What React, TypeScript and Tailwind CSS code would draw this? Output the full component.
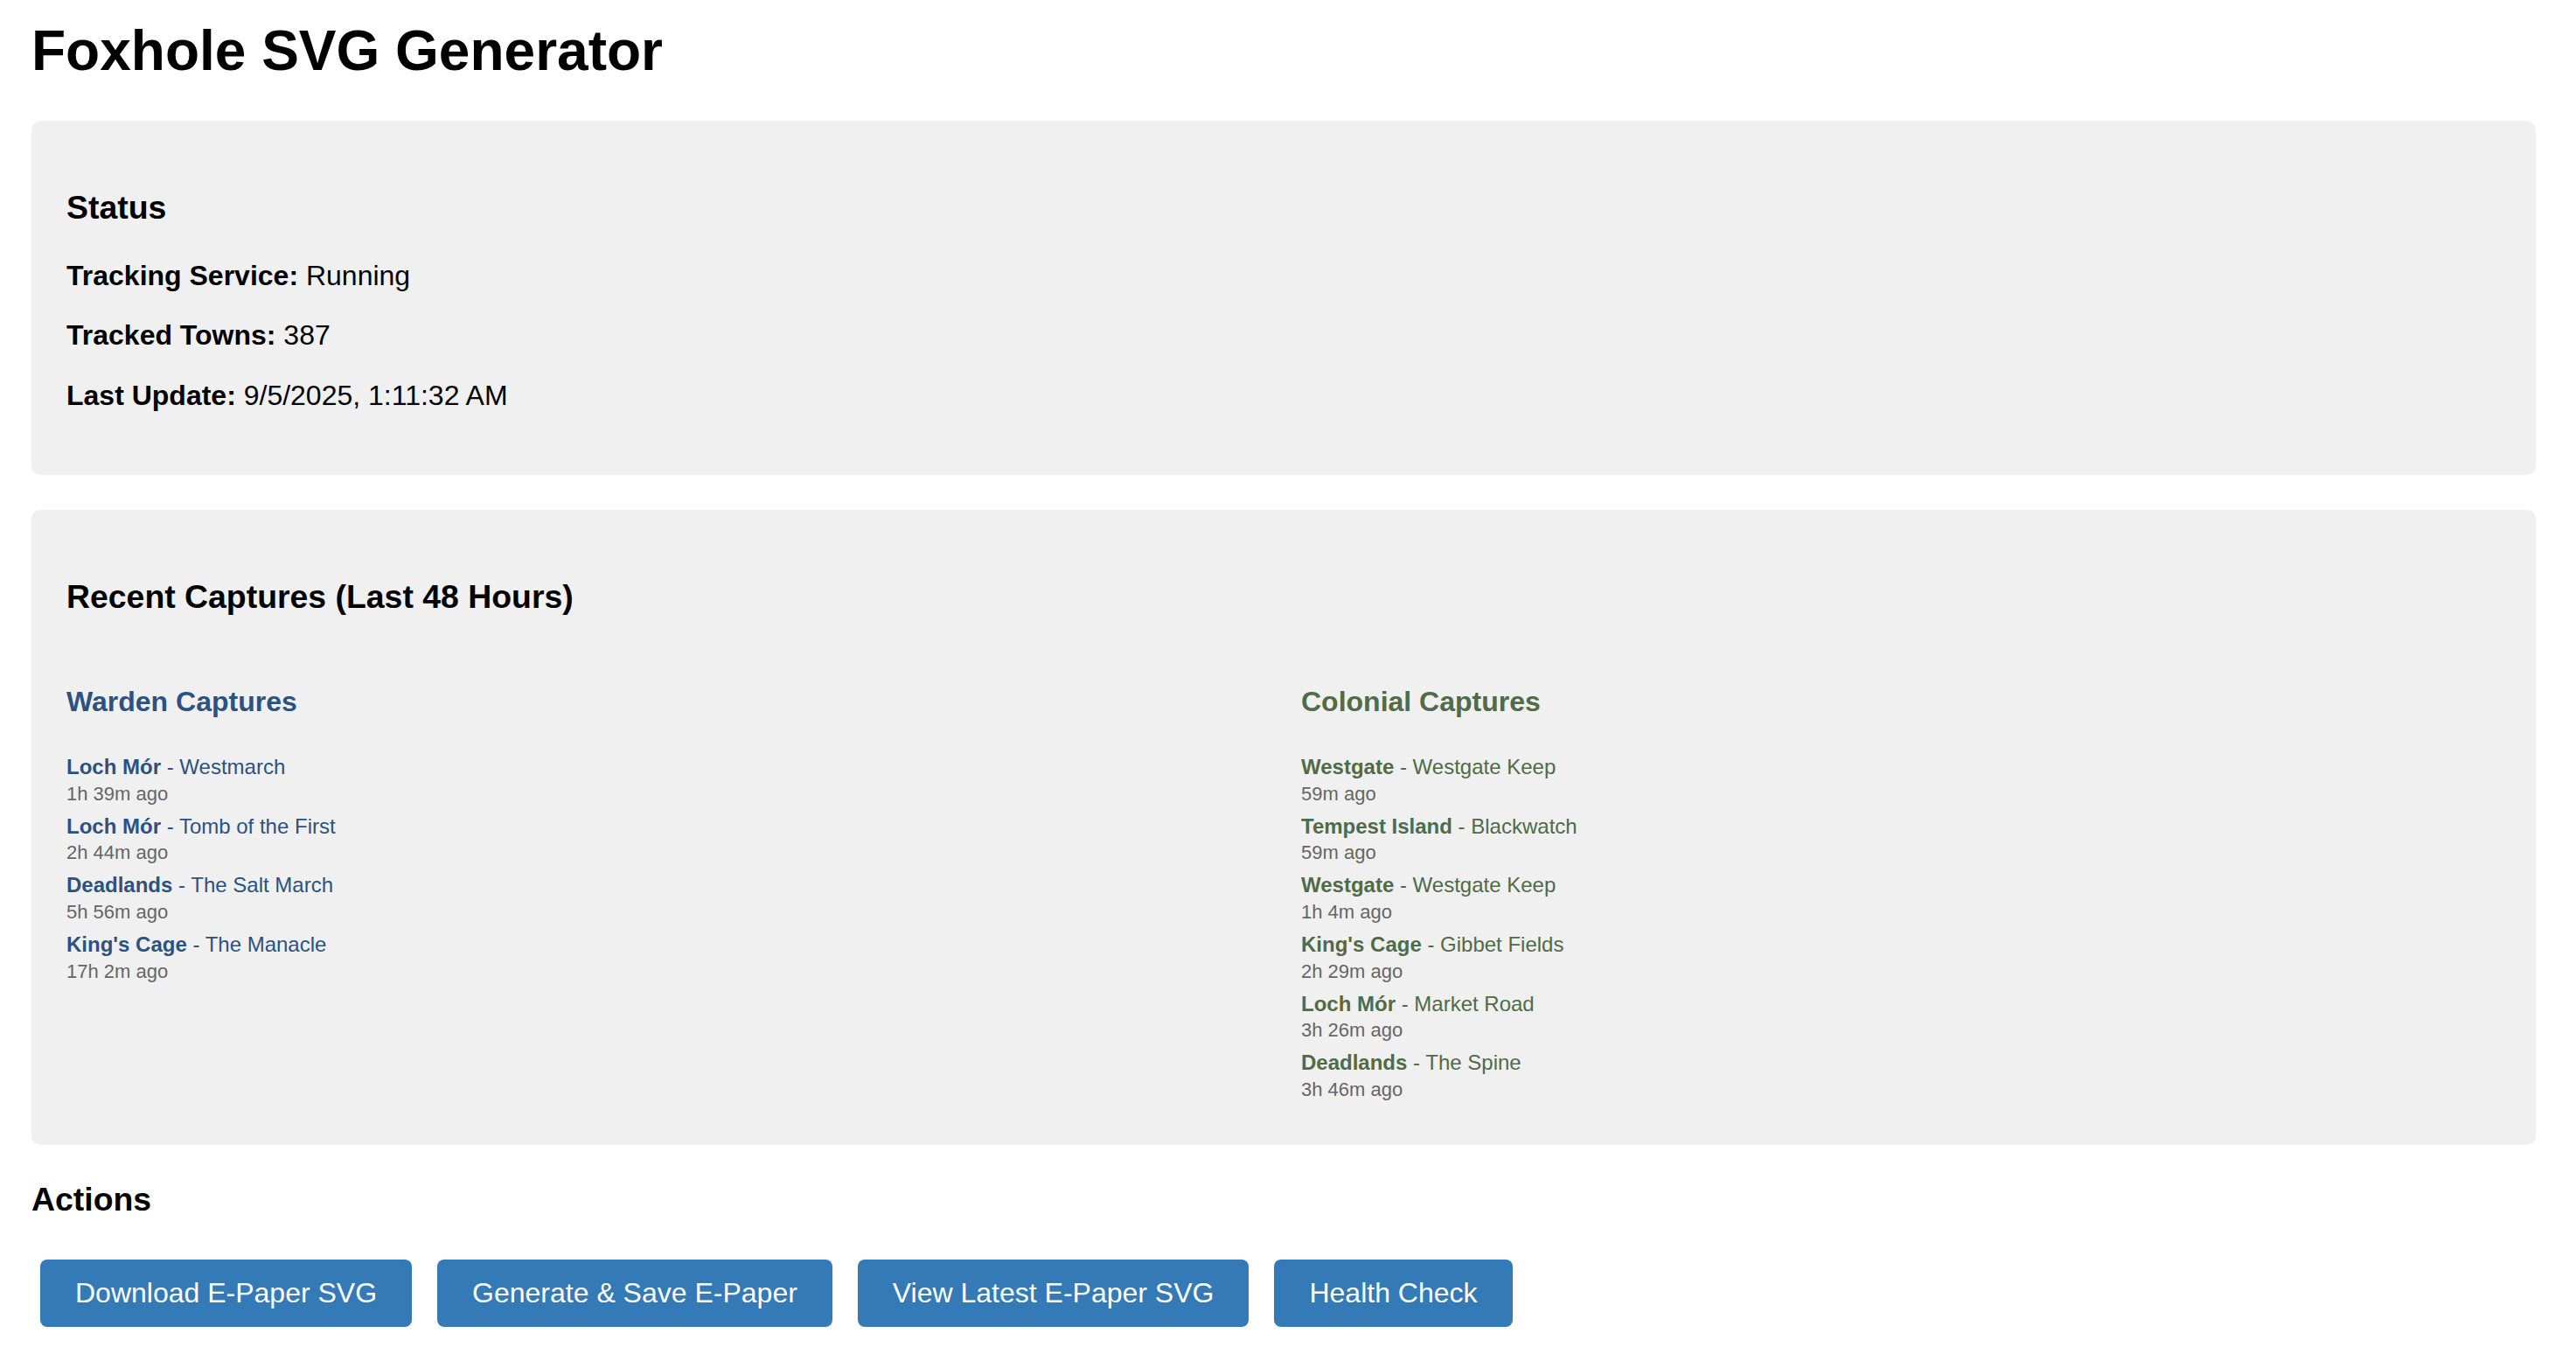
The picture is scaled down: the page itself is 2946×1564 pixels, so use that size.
import React from 'react';

type Capture = { region: string; town: string; ago: string };

const warden: Capture[] = [
  { region: 'Loch Mór', town: 'Westmarch', ago: '1h 39m ago' },
  { region: 'Loch Mór', town: 'Tomb of the First', ago: '2h 44m ago' },
  { region: 'Deadlands', town: 'The Salt March', ago: '5h 56m ago' },
  { region: "King's Cage", town: 'The Manacle', ago: '17h 2m ago' },
];

const colonial: Capture[] = [
  { region: 'Westgate', town: 'Westgate Keep', ago: '59m ago' },
  { region: 'Tempest Island', town: 'Blackwatch', ago: '59m ago' },
  { region: 'Westgate', town: 'Westgate Keep', ago: '1h 4m ago' },
  { region: "King's Cage", town: 'Gibbet Fields', ago: '2h 29m ago' },
  { region: 'Loch Mór', town: 'Market Road', ago: '3h 26m ago' },
  { region: 'Deadlands', town: 'The Spine', ago: '3h 46m ago' },
];

function CaptureList({ title, items, color }: { title: string; items: Capture[]; color: 'warden' | 'colonial' }) {
  const textColor = color === 'warden' ? 'text-[#2c5282]' : 'text-[#4f6b47]';
  return (
    <div>
      <h4 className={`${textColor} text-[32px] leading-[36.8px] font-bold mt-[42px] mb-[42.6px]`}>{title}</h4>
      {items.map((c, i) => (
        <div key={i} className="mb-[10.7px]">
          <div className={`${textColor} text-[24px] leading-[27.6px]`}>
            <span className="font-bold">{c.region}</span> - {c.town}
          </div>
          <div className="mt-[4px] text-[22px] leading-[25.3px] text-[#666666]">{c.ago}</div>
        </div>
      ))}
    </div>
  );
}

function StatusRow({ label, value }: { label: string; value: string }) {
  return (
    <p className="text-[32px] leading-[36.8px] mb-[32px]">
      <strong className="font-bold">{label}</strong> {value}
    </p>
  );
}

const actions = ['Download E-Paper SVG', 'Generate & Save E-Paper', 'View Latest E-Paper SVG', 'Health Check'];

export default function App() {
  return (
    <div className="min-h-screen bg-white pl-[36px] pr-[46px] pt-[22px] pb-[40px] font-['Liberation_Sans',Arial,sans-serif] text-black">
      <h1 className="text-[64px] leading-[73.5px] font-bold mb-[42px]">Foxhole SVG Generator</h1>

      <section className="bg-[#f0f0f0] rounded-[10px] px-[40px] pt-[40px] pb-[40px]">
        <h3 className="text-[37.4px] leading-[43px] font-bold mt-[38px] mb-[38px]">Status</h3>
        <StatusRow label="Tracking Service:" value="Running" />
        <StatusRow label="Tracked Towns:" value="387" />
        <StatusRow label="Last Update:" value="9/5/2025, 1:11:32 AM" />
      </section>

      <section className="bg-[#f0f0f0] rounded-[10px] p-[40px] mt-[40px]">
        <h3 className="text-[37.4px] leading-[43px] font-bold mt-[38px] mb-[38px]">Recent Captures (Last 48 Hours)</h3>
        <div className="grid grid-cols-2 gap-[40px]">
          <CaptureList title="Warden Captures" items={warden} color="warden" />
          <CaptureList title="Colonial Captures" items={colonial} color="colonial" />
        </div>
      </section>

      <h3 className="text-[37.4px] leading-[43px] font-bold mt-[41px]">Actions</h3>
      <div className="flex gap-[29px] pl-[10px] mt-[47px]">
        {actions.map((a) => (
          <button
            key={a}
            className="bg-[#337ab7] text-white text-[32px] leading-[36.8px] px-[40px] py-[20px] rounded-[8px] whitespace-nowrap"
          >
            {a}
          </button>
        ))}
      </div>
    </div>
  );
}
